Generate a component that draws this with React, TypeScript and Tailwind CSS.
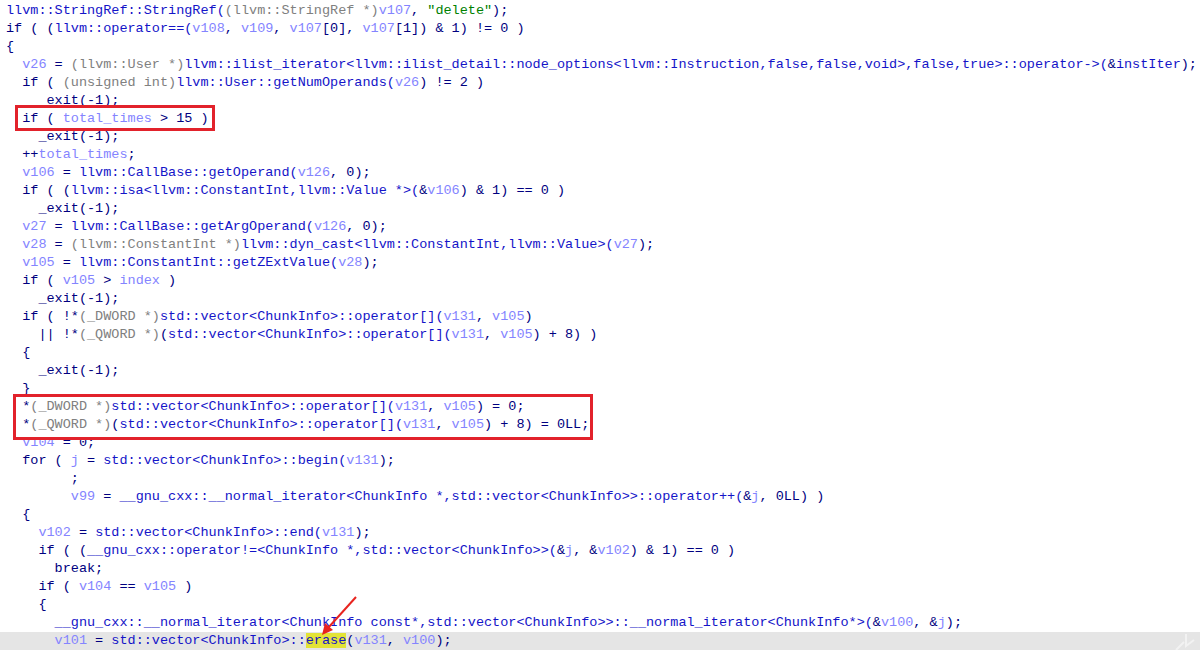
import React from "react";

type Tok = [string, string];

const C: Record<string, string> = {
  k: "text-[#000080]",
  f: "text-[#1414c8]",
  v: "text-[#8484ff]",
  t: "text-[#808080]",
  s: "text-[#008000]",
  h: "text-[#1414c8] bg-[#e3e336]",
};

const ex: Tok[] = [["k", "_exit(-1);"]];

const lines: { ind: number; toks: Tok[]; box?: string; hl?: boolean }[] = [
  { ind: 0, toks: [["f", "llvm::StringRef::StringRef("], ["t", "(llvm::StringRef *)"], ["v", "v107"], ["k", ", "], ["s", "\"delete\""], ["k", ");"]] },
  { ind: 0, toks: [["k", "if ( ("], ["f", "llvm::operator==("], ["v", "v108"], ["k", ", "], ["v", "v109"], ["k", ", "], ["v", "v107"], ["k", "[0], "], ["v", "v107"], ["k", "[1]) & 1) != 0 )"]] },
  { ind: 0, toks: [["k", "{"]] },
  { ind: 2, toks: [["v", "v26"], ["k", " = "], ["t", "(llvm::User *)"], ["f", "llvm::ilist_iterator<llvm::ilist_detail::node_options<llvm::Instruction,false,false,void>,false,true>::operator->("], ["k", "&"], ["f", "instIter"], ["k", ");"]] },
  { ind: 2, toks: [["k", "if ( "], ["t", "(unsigned int)"], ["f", "llvm::User::getNumOperands("], ["v", "v26"], ["k", ") != 2 )"]] },
  { ind: 4, toks: ex },
  { ind: 2, toks: [["k", "if ( "], ["v", "total_times"], ["k", " > 15 )"]], box: "b1" },
  { ind: 4, toks: ex },
  { ind: 2, toks: [["k", "++"], ["v", "total_times"], ["k", ";"]] },
  { ind: 2, toks: [["v", "v106"], ["k", " = "], ["f", "llvm::CallBase::getOperand("], ["v", "v126"], ["k", ", 0);"]] },
  { ind: 2, toks: [["k", "if ( ("], ["f", "llvm::isa<llvm::ConstantInt,llvm::Value *>("], ["k", "&"], ["v", "v106"], ["k", ") & 1) == 0 )"]] },
  { ind: 4, toks: ex },
  { ind: 2, toks: [["v", "v27"], ["k", " = "], ["f", "llvm::CallBase::getArgOperand("], ["v", "v126"], ["k", ", 0);"]] },
  { ind: 2, toks: [["v", "v28"], ["k", " = "], ["t", "(llvm::ConstantInt *)"], ["f", "llvm::dyn_cast<llvm::ConstantInt,llvm::Value>("], ["v", "v27"], ["k", ");"]] },
  { ind: 2, toks: [["v", "v105"], ["k", " = "], ["f", "llvm::ConstantInt::getZExtValue("], ["v", "v28"], ["k", ");"]] },
  { ind: 2, toks: [["k", "if ( "], ["v", "v105"], ["k", " > "], ["v", "index"], ["k", " )"]] },
  { ind: 4, toks: ex },
  { ind: 2, toks: [["k", "if ( !*"], ["t", "(_DWORD *)"], ["f", "std::vector<ChunkInfo>::operator[]("], ["v", "v131"], ["k", ", "], ["v", "v105"], ["k", ")"]] },
  { ind: 4, toks: [["k", "|| !*"], ["t", "(_QWORD *)"], ["k", "("], ["f", "std::vector<ChunkInfo>::operator[]("], ["v", "v131"], ["k", ", "], ["v", "v105"], ["k", ") + 8) )"]] },
  { ind: 2, toks: [["k", "{"]] },
  { ind: 4, toks: ex },
  { ind: 2, toks: [["k", "}"]] },
  { ind: 2, toks: [["k", "*"], ["t", "(_DWORD *)"], ["f", "std::vector<ChunkInfo>::operator[]("], ["v", "v131"], ["k", ", "], ["v", "v105"], ["k", ") = 0;"]], box: "b2" },
  { ind: 2, toks: [["k", "*"], ["t", "(_QWORD *)"], ["k", "("], ["f", "std::vector<ChunkInfo>::operator[]("], ["v", "v131"], ["k", ", "], ["v", "v105"], ["k", ") + 8) = 0LL;"]] },
  { ind: 2, toks: [["v", "v104"], ["k", " = 0;"]] },
  { ind: 2, toks: [["k", "for ( "], ["v", "j"], ["k", " = "], ["f", "std::vector<ChunkInfo>::begin("], ["v", "v131"], ["k", ");"]] },
  { ind: 8, toks: [["k", ";"]] },
  { ind: 8, toks: [["v", "v99"], ["k", " = "], ["f", "__gnu_cxx::__normal_iterator<ChunkInfo *,std::vector<ChunkInfo>>::operator++("], ["k", "&"], ["v", "j"], ["k", ", 0LL) )"]] },
  { ind: 2, toks: [["k", "{"]] },
  { ind: 4, toks: [["v", "v102"], ["k", " = "], ["f", "std::vector<ChunkInfo>::end("], ["v", "v131"], ["k", ");"]] },
  { ind: 4, toks: [["k", "if ( ("], ["f", "__gnu_cxx::operator!=<ChunkInfo *,std::vector<ChunkInfo>>("], ["k", "&"], ["v", "j"], ["k", ", &"], ["v", "v102"], ["k", ") & 1) == 0 )"]] },
  { ind: 6, toks: [["k", "break;"]] },
  { ind: 4, toks: [["k", "if ( "], ["v", "v104"], ["k", " == "], ["v", "v105"], ["k", " )"]] },
  { ind: 4, toks: [["k", "{"]] },
  { ind: 6, toks: [["f", "__gnu_cxx::__normal_iterator<ChunkInfo const*,std::vector<ChunkInfo>>::__normal_iterator<ChunkInfo*>("], ["k", "&"], ["v", "v100"], ["k", ", &"], ["v", "j"], ["k", ");"]] },
  { ind: 6, toks: [["v", "v101"], ["k", " = "], ["f", "std::vector<ChunkInfo>::"], ["h", "erase"], ["k", "("], ["v", "v131"], ["k", ", "], ["v", "v100"], ["k", ");"]], hl: true },
];

function Line({ ind, toks, hl }: { ind: number; toks: Tok[]; hl?: boolean }) {
  return (
    <div className={`h-[18px] leading-[18px] whitespace-pre pl-[6px] ${hl ? "bg-[#e5e5e5]" : ""}`}>
      {" ".repeat(ind)}
      {toks.map((t, i) => (
        <span key={i} className={C[t[0]]}>
          {t[1]}
        </span>
      ))}
    </div>
  );
}

export default function App() {
  const out: React.ReactNode[] = [];
  for (let i = 0; i < lines.length; i++) {
    const l = lines[i];
    if (l.box === "b1") {
      out.push(
        <div key={i} className="relative">
          <Line {...l} />
          <div className="absolute left-[15px] top-[-5px] w-[200px] h-[26px] border-[3px] border-[#e2222b]" />
        </div>
      );
    } else if (l.box === "b2") {
      const n = lines[i + 1];
      out.push(
        <div key={i} className="relative">
          <Line {...l} />
          <Line {...n} />
          <div className="absolute left-[13px] top-[-4px] w-[580px] h-[46px] border-[3px] border-[#e2222b]" />
        </div>
      );
      i++;
    } else {
      out.push(<Line key={i} {...l} />);
    }
  }
  return (
    <div
      className="relative w-[1200px] h-[650px] overflow-hidden bg-white pt-[2px] text-[13.5px]"
      style={{ fontFamily: '"Liberation Mono", "DejaVu Sans Mono", monospace' }}
    >
      {out}
      <svg className="absolute left-0 top-0 pointer-events-none" width="1200" height="650">
        <line x1="356" y1="597" x2="328" y2="628" stroke="#e8241f" strokeWidth="2" />
        <polygon points="322,635 325,623 333,630" fill="#e8241f" />
        <g stroke="#f2f2f2" strokeWidth="2" fill="none">
          <path d="M1176 650 L1184 642" />
          <path d="M1186 634 L1186 646 L1194 640" />
        </g>
      </svg>
    </div>
  );
}
